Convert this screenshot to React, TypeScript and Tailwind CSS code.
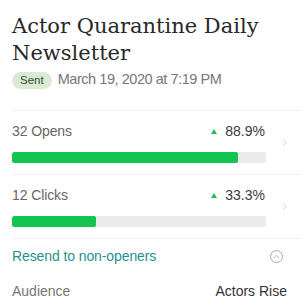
import { ChevronRight, ChevronUp } from 'lucide-react'

type Stat = { label: string; pct: string; fill: number }

const stats: Stat[] = [
  { label: '32 Opens', pct: '88.9%', fill: 89 },
  { label: '12 Clicks', pct: '33.3%', fill: 33 },
]

function StatRow({ stat }: { stat: Stat }) {
  return (
    <div className="flex border-t border-[#f0f0f0]">
      <div className="w-[254px] pt-[10px] pb-[11px]">
        <div className="flex items-center h-5">
          <span className="text-[14px] text-[#666] tracking-[-0.1px]">{stat.label}</span>
          <span className="ml-auto mr-[8px] w-0 h-0 border-l-[3.5px] border-r-[3.5px] border-b-[5px] border-l-transparent border-r-transparent border-b-[#1fbf55]" />
          <span className="text-[14px] text-[#3a3a3a] mr-[1px]">{stat.pct}</span>
        </div>
        <div className="mt-[11px] h-[11px] rounded-[2px] bg-[#ececea] overflow-hidden">
          <div className="h-full bg-[#14c452] rounded-[2px]" style={{ width: `${stat.fill}%` }} />
        </div>
      </div>
      <div className="flex-1 flex items-center justify-center pl-[2px]">
        <ChevronRight className="w-[13px] h-[13px] text-[#c8c8c8]" strokeWidth={1.5} />
      </div>
    </div>
  )
}

export default function App() {
  return (
    <div
      className="w-[300px] h-[300px] overflow-hidden bg-white"
      style={{ fontFamily: '"Liberation Sans", Arial, sans-serif' }}
    >
      {/* Header */}
      <div className="pl-3 pt-[13px]">
        <h1
          className="text-[21px] leading-[27px] text-[#282828]"
          style={{ fontFamily: '"DejaVu Serif", serif' }}
        >
          Actor Quarantine Daily
          <br />
          Newsletter
        </h1>
        <div className="mt-[3px] flex items-center gap-[6px] h-5">
          <span className="h-[17px] px-[8px] rounded-full bg-[#d9ebd3] text-[11.5px] leading-[17px] text-[#3a463a]">
            Sent
          </span>
          <span className="text-[14.5px] text-[#777] tracking-[-0.45px]">March 19, 2020 at 7:19 PM</span>
        </div>
      </div>

      {/* Stats */}
      <div className="ml-3 mt-[20px]">
        {stats.map((s) => (
          <StatRow key={s.label} stat={s} />
        ))}

        <div className="flex items-center border-t border-[#f0f0f0] pt-[7px] pb-[8px] pr-[17px]">
          <span className="text-[14px] leading-5 text-[#2a8f8f] tracking-[-0.1px]">Resend to non-openers</span>
          <span className="ml-auto w-[13px] h-[13px] rounded-full border border-[#aaa] flex items-center justify-center">
            <ChevronUp className="w-[9px] h-[9px] text-[#999]" strokeWidth={2} />
          </span>
        </div>

        <div className="flex items-center pt-[7px] pr-[13px]">
          <span className="text-[14px] leading-5 text-[#777]">Audience</span>
          <span className="ml-auto text-[14px] leading-5 text-[#333]">Actors Rise</span>
        </div>
      </div>
    </div>
  )
}
